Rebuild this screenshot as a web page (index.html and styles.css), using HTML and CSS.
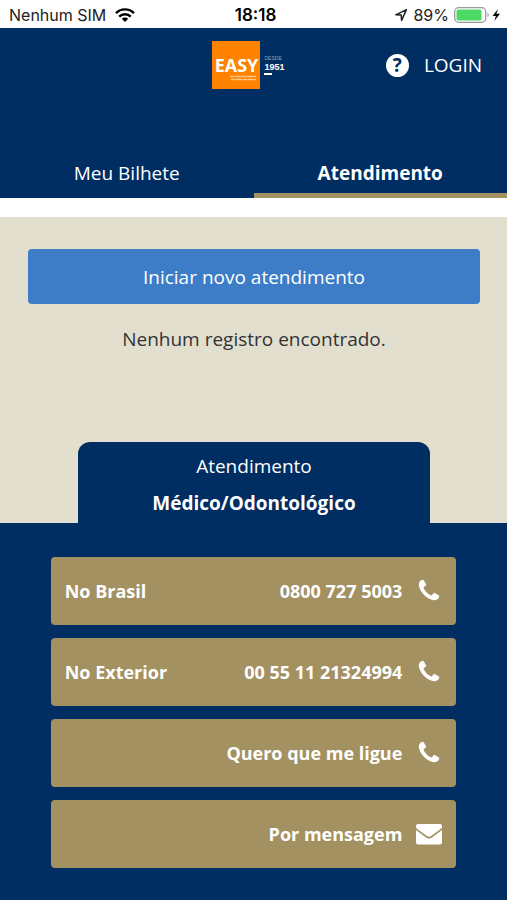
FILE: index.html
```html
<!DOCTYPE html>
<html lang="pt-BR">
<head>
    <meta charset="UTF-8">
    <meta name="viewport" content="width=device-width, initial-scale=1.0">
    <title>Atendimento</title>
    <link rel="stylesheet" href="styles.css">
</head>
<body>
    <div class="status-bar">
        <div class="carrier">
            <span>Nenhum SIM</span>
            <svg width="20" height="14" viewBox="0 0 20 14">
                <g fill="none" stroke="#000" stroke-width="2.4">
                    <path d="M1 5.2a12.6 12.6 0 0 1 18 0"/>
                    <path d="M4.2 8.6a8.2 8.2 0 0 1 11.6 0"/>
                </g>
                <path d="M6.8 10.8a4.5 4.5 0 0 1 6.4 0L10 14z"/>
            </svg>
        </div>
        <span class="clock">18:18</span>
        <div class="battery">
            <svg width="14" height="14" viewBox="0 0 14 14">
                <path d="M1.8 6.8L12.4 1.6L7.6 12.4L7.2 7.1z" fill="none" stroke="#222" stroke-width="1.5" stroke-linejoin="round"/>
            </svg>
            <span>89%</span>
            <svg width="48" height="16" viewBox="0 0 48 16">
                <rect x="0.7" y="0.7" width="31" height="14.6" rx="4" fill="#fff" stroke="#9a9a9a" stroke-width="1.3"/>
                <rect x="2.5" y="2.5" width="25" height="11" rx="1.5" fill="#4cd964"/>
                <path d="M33.5 5.5q2.6 2.5 0 5z" fill="#9a9a9a"/>
                <path d="M44 2L38.5 9h3.4l-1.6 5L46 6.8h-3.6z"/>
            </svg>
        </div>
    </div>

    <header class="header">
        <div class="top-row">
            <a href="#" class="logo">
                <span class="logo-box">
                    <span class="logo-name">EASY</span>
                    <svg class="logo-lines" width="28" height="6" viewBox="0 0 28 6">
                        <path d="M1 1.5h26M2 4.5h25" stroke="#ffc98a" stroke-width="1.4" stroke-dasharray="4 .5 7 .5"/>
                    </svg>
                </span>
                <span class="logo-since">
                    <span class="since-label">DESDE</span>
                    <span class="since-year">1951</span>
                </span>
            </a>
            <div class="account">
                <button class="help" aria-label="Ajuda">?</button>
                <a href="#" class="login">LOGIN</a>
            </div>
        </div>
        <nav class="tabs">
            <a href="#" class="tab">Meu Bilhete</a>
            <a href="#" class="tab active">Atendimento</a>
        </nav>
    </header>

    <main class="content">
        <section class="records">
            <button class="new-btn">Iniciar novo atendimento</button>
            <p class="empty">Nenhum registro encontrado.</p>
            <h2 class="section-title">
                <span>Atendimento</span>
                <strong>Médico/Odontológico</strong>
            </h2>
        </section>

        <section class="contacts">
            <a href="tel:08007275003" class="contact">
                <span>No Brasil</span>
                <span class="value">0800 727 5003</span>
                <svg class="icon" viewBox="-192 0 1792 1792"><use href="#phone"/></svg>
            </a>
            <a href="tel:00551121324994" class="contact">
                <span>No Exterior</span>
                <span class="value">00 55 11 21324994</span>
                <svg class="icon" viewBox="-192 0 1792 1792"><use href="#phone"/></svg>
            </a>
            <button class="contact">
                <span class="value">Quero que me ligue</span>
                <svg class="icon" viewBox="-192 0 1792 1792">
                    <path id="phone" d="M1408 1240q0 27-10 70.5t-21 68.5q-21 50-122 106-94 51-186 51-27 0-53-3.5t-57.5-12.5-47-14.5-55.5-20.5-49-18q-98-35-175-83-127-79-264-216t-216-264q-48-77-83-175-3-9-18-49t-20.5-55.5-14.5-47-12.5-57.5-3.5-53q0-92 51-186 56-101 106-122 25-11 68.5-21t70.5-10q14 0 21 3 18 6 53 76 11 19 30 54t35 63.5 31 53.5q3 4 17.5 25t21.5 35.5 7 28.5q0 20-28.5 50t-62 55-62 53-28.5 46q0 9 5 22.5t8.5 20.5 14 24 11.5 19q76 137 174 235t235 174q2 1 19 11.5t24 14 20.5 8.5 22.5 5q18 0 46-28.5t53-62 55-62 50-28.5q14 0 28.5 7t35.5 21.5 25 17.5q25 15 53.5 31t63.5 35 54 30q70 35 76 53 3 7 3 21z"/>
                </svg>
            </button>
            <button class="contact">
                <span class="value">Por mensagem</span>
                <svg class="icon" viewBox="0 0 26 26">
                    <path d="M2 3h22q2 0 2 2v1.5q-.6 1-2 2L15 15q-2 1.400-4 0L2 8.500Q.6 7.500 0 6.500V5q0-2 2-2z"/>
                    <path d="M0 9l10 7.500q3 2.200 6 0L26 9v12.500q0 2-2 2H2q-2 0-2-2z"/>
                </svg>
            </button>
        </section>
    </main>
</body>
</html>
```

FILE: styles.css
```css
* {
    margin: 0;
    padding: 0;
    box-sizing: border-box;
}

body {
    display: flex;
    flex-direction: column;
    min-height: 100vh;
    background: #fff;
    font-family: 'Open Sans', sans-serif;
    font-size: 19px;
    line-height: 24px;
    color: #fff;
}

a {
    color: inherit;
    text-decoration: none;
}

button {
    border: none;
    font: inherit;
    color: inherit;
    cursor: pointer;
}

.status-bar {
    display: grid;
    grid-template-columns: 1fr auto 1fr;
    align-items: center;
    height: 28px;
    padding: 2px 5px 0 9px;
    font-family: Inter, sans-serif;
    font-size: 16px;
    color: #222;
}

.carrier {
    display: flex;
    align-items: center;
    gap: 9px;
}

.clock {
    font-size: 17px;
    font-weight: 600;
    color: #000;
}

.battery {
    display: flex;
    align-items: center;
    justify-content: flex-end;
    gap: 5px;
}

.header {
    background: #002d62;
}

.top-row {
    display: grid;
    grid-template-columns: 1fr auto 1fr;
    align-items: center;
    padding: 13px 25px 0;
}

.logo {
    grid-column: 2;
    display: flex;
    align-items: center;
    gap: 4px;
    padding-right: 10px;
}

.logo-box {
    display: flex;
    flex-direction: column;
    align-items: center;
    width: 48px;
    height: 48px;
    padding-top: 14px;
    background: #ff8200;
}

.logo-name {
    font-size: 18px;
    line-height: 20px;
    font-weight: 700;
}

.logo-lines {
    align-self: flex-end;
    margin-right: 3px;
}

.logo-since {
    display: flex;
    flex-direction: column;
    font-family: 'Liberation Sans Narrow', 'Liberation Sans', sans-serif;
}

.logo-since::after {
    content: '';
    width: 8px;
    height: 2px;
    background: #fff;
}

.since-label {
    font-size: 5px;
    line-height: 6px;
    color: #8fa3bd;
}

.since-year {
    font-size: 9px;
    line-height: 12px;
    font-weight: 700;
}

.account {
    display: flex;
    align-items: center;
    justify-content: flex-end;
    gap: 15px;
}

.help {
    width: 23px;
    height: 23px;
    border-radius: 50%;
    background: #fff;
    font-size: 19px;
    line-height: 23px;
    font-weight: 700;
    color: #002d62;
}

.tabs {
    display: flex;
    margin-top: 61px;
}

.tab {
    flex: 1;
    padding: 11px 0 8px;
    border-bottom: 5px solid transparent;
    text-align: center;
}

.tab.active {
    border-color: #a39161;
    font-weight: 700;
}

.content {
    flex: 1;
    display: flex;
    flex-direction: column;
    margin-top: 19px;
}

.records {
    display: flex;
    flex-direction: column;
    align-items: center;
    padding: 32px 27px 0 28px;
    background: #e2dfcf;
}

.new-btn {
    width: 100%;
    height: 55px;
    border-radius: 4px;
    background: #3d7cc6;
}

.empty {
    margin-top: 23px;
    color: #333;
}

.section-title {
    display: flex;
    flex-direction: column;
    gap: 13px;
    width: 78%;
    margin-top: 91px;
    padding: 12px 0 8px;
    border-radius: 12px 12px 0 0;
    background: #002d62;
    font-size: 19px;
    font-weight: 400;
    text-align: center;
}

.contacts {
    flex: 1;
    display: flex;
    flex-direction: column;
    gap: 13px;
    padding: 34px 10%;
    background: #002d62;
}

.contact {
    display: flex;
    align-items: center;
    height: 68px;
    padding: 0 14px;
    border-radius: 4px;
    background: #a39161;
    font-size: 18px;
    font-weight: 700;
}

.value {
    margin-left: auto;
}

.icon {
    width: 26px;
    height: 26px;
    margin-left: 14px;
    fill: #fff;
}
```
